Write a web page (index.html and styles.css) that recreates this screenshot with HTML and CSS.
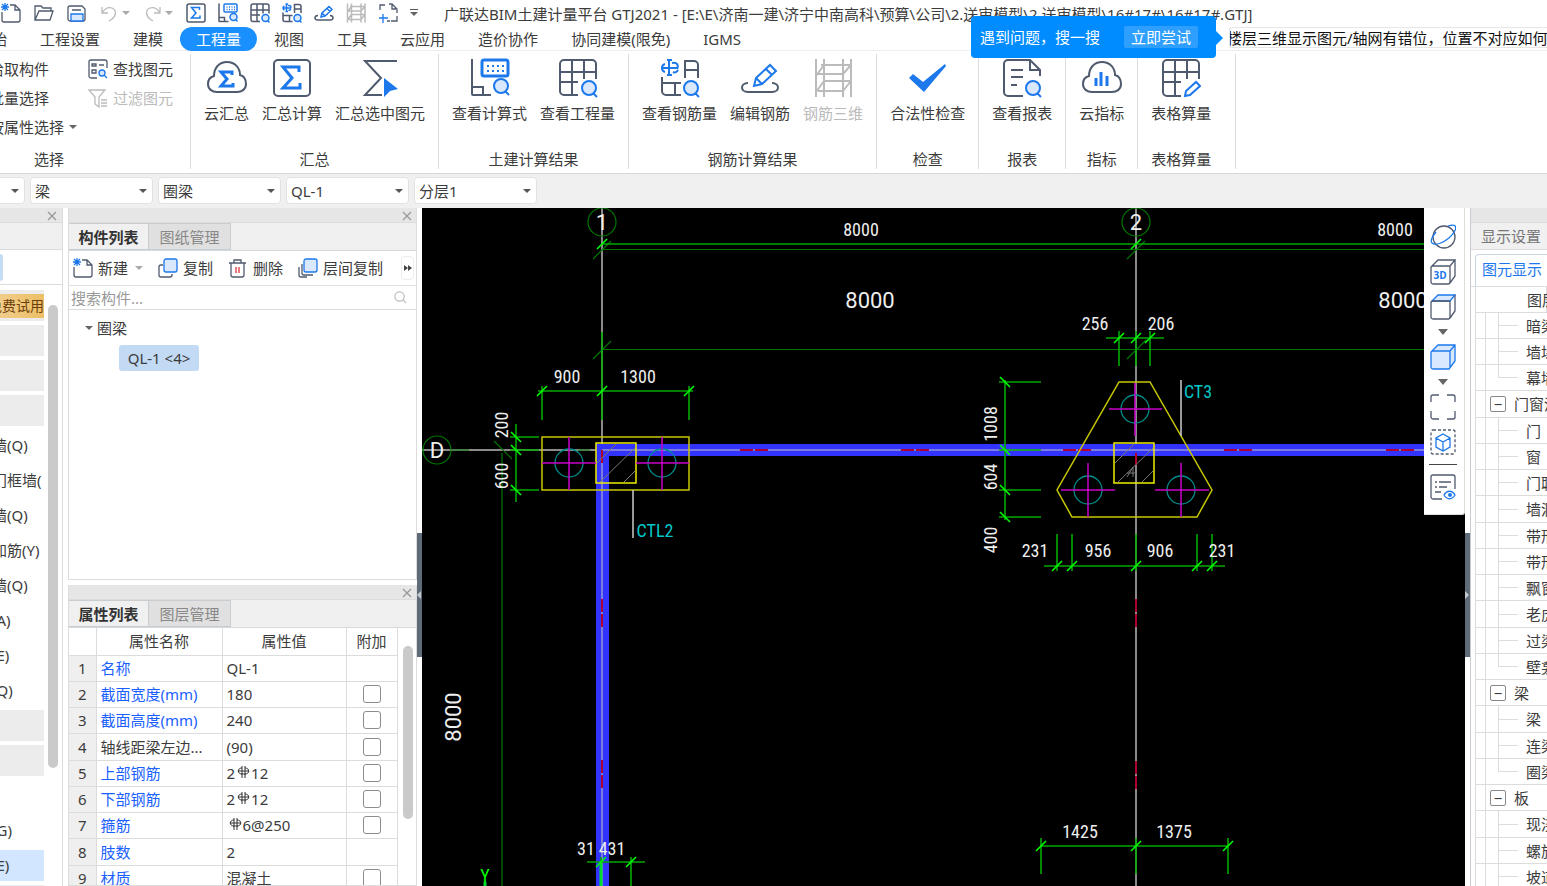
FILE: index.html
```html
<!DOCTYPE html>
<html lang="zh-CN">
<head>
  <meta charset="UTF-8">
  <meta name="viewport" content="width=device-width, initial-scale=1.0">
  <title>广联达BIM土建计量平台 GTJ2021</title>
  <link rel="stylesheet" href="styles.css">
</head>
<body>
  <!-- 图标 -->
  <svg class="sprite" aria-hidden="true">
    <symbol id="i-new" viewBox="0 0 20 20"><path class="d" d="M1 9v8a2 2 0 0 0 2 2h14a2 2 0 0 0 2-2V7l-5-5H9M14 2v5h5"/><path class="b" d="M1 1l6 6M7 1L1 7M4 0v8M0 4h8"/></symbol>
    <symbol id="i-open" viewBox="0 0 20 20"><path class="d" d="M1 17V3h6l2 2h8v3M1 17L5 8h14l-3 9z"/></symbol>
    <symbol id="i-save" viewBox="0 0 20 20"><path class="d" d="M3 3h12l3 3v10a2 2 0 0 1-2 2H3a2 2 0 0 1-2-2V5a2 2 0 0 1 2-2zM5 7h9"/><path class="bl" d="M4 18v-7h12v7z"/></symbol>
    <symbol id="i-undo" viewBox="0 0 20 20"><path class="g" d="M2 4v6h6M2 10c3-5 7-6 10-5 5 2 4 8 0 11l-3 2"/></symbol>
    <symbol id="i-redo" viewBox="0 0 20 20"><path class="g" d="M17 4v6h-6M17 10c-3-5-7-6-10-5-5 2-4 8 0 11l3 2"/></symbol>
    <symbol id="i-cloudsum" viewBox="0 0 40 40"><path class="d" d="M10 34c-5 0-9-3-9-8 0-4 2-7 6-8C7 10 12 4 20 4s13 6 13 13c4 1 6 5 6 9 0 5-4 8-9 8z"/><path class="b thick" d="M25 17v-3H14l6 7-6 7h12v-3"/></symbol>
    <symbol id="i-sum" viewBox="0 0 40 40"><rect class="d" x="2" y="2" width="36" height="36" rx="4"/><path class="b thick" d="M27 14V9H11l9 11-9 10h17v-5"/></symbol>
    <symbol id="i-sumsel" viewBox="0 0 40 40"><path class="d" d="M36 4v-1H5l16 17L5 37h17"/><path class="bf" d="M24 20l14 11-8 2-6 6z"/></symbol>
    <symbol id="i-calc" viewBox="0 0 40 40"><path class="d" d="M2 1v35a1 1 0 0 0 1 1h18M2 29h11v8"/><rect class="b thick" x="12" y="2" width="26" height="16" rx="2"/><path class="b dot" d="M17 8h18M17 13h18"/><circle class="bl" cx="31" cy="28" r="7"/><path class="b" d="M35 33l4 4"/></symbol>
    <symbol id="i-grid" viewBox="0 0 40 40"><path class="d" d="M20 37H6a4 4 0 0 1-4-4V6a4 4 0 0 1 4-4h28a4 4 0 0 1 4 4v15M2 14h36M2 24h18M14 2v35M26 2v19"/><circle class="bl" cx="31" cy="30" r="7"/><path class="b" d="M35 35l4 4"/></symbol>
    <symbol id="i-rebar" viewBox="0 0 40 40"><path class="b" d="M9 1v17M7 2h5M7 17h5M5 6c-4 1-4 7 0 8M12 5c5-1 7 2 5 6M13 14c2 1 4 0 5-2M1 10h17"/><path class="d" d="M25 20V3h9a4 4 0 0 1 4 4v13M25 12h13M2 19v14a4 4 0 0 0 4 4h15M2 25h19M15 25v12"/><circle class="bl" cx="31" cy="30" r="7"/><path class="b" d="M35 35l4 4"/></symbol>
    <symbol id="i-edit" viewBox="0 0 40 40"><path class="d" d="M8 25c-8 0-8 9 0 9h24c8 0 8-9 0-9"/><path class="b" d="M14 28l2-8L30 7l6 6-14 13zM26 11l6 6M16 20l6 6"/></symbol>
    <symbol id="i-3drebar" viewBox="0 0 40 40"><path class="g" d="M3 1v38M11 1v38M30 1v38M38 1v38M8 7h30M5 16h26M10 23h28M5 33h26M3 18l8-11M3 34l8-11M30 16l8-9M30 33l8-10"/></symbol>
    <symbol id="i-crop" viewBox="0 0 20 20"><path class="d" d="M2 7V2h5M11 1h3l5 5v4M14 2v4h4M19 13v5h-6M9 18h3"/><path class="b" d="M1 15h9M5 11v9"/></symbol>
    <symbol id="i-check" viewBox="0 0 40 40"><path class="bf" d="M1 20l4-4 10 8L37 6l1 2-22 26z"/></symbol>
    <symbol id="i-report" viewBox="0 0 40 40"><path class="d" d="M21 38H6a4 4 0 0 1-4-4V6a4 4 0 0 1 4-4h22l10 10v6M28 2v10h10M9 12h12M9 19h12M9 27h6"/><circle class="bl" cx="31" cy="30" r="7"/><path class="b" d="M35 35l4 4"/></symbol>
    <symbol id="i-cloudidx" viewBox="0 0 40 40"><path class="d" d="M10 34c-5 0-9-3-9-8 0-4 2-7 6-8C7 10 12 4 20 4s13 6 13 13c4 1 6 5 6 9 0 5-4 8-9 8z"/><path class="b thick" d="M14 20v8M19 14v14M25 18v10"/></symbol>
    <symbol id="i-gridedit" viewBox="0 0 40 40"><path class="d" d="M20 38H6a4 4 0 0 1-4-4V6a4 4 0 0 1 4-4h28a4 4 0 0 1 4 4v15M2 14h36M2 24h18M14 2v36M26 2v19"/><path class="b" d="M24 38l1-5 10-9 4 4-10 9z"/></symbol>
    <symbol id="i-find" viewBox="0 0 20 20"><path class="d" d="M9 19H3a2 2 0 0 1-2-2V3a2 2 0 0 1 2-2h14a2 2 0 0 1 2 2v6M4 5h4v2H4zM11 6h5M4 11h4v3H4z"/><circle class="bl" cx="14" cy="14" r="3"/><path class="b" d="M16 16l3 3"/></symbol>
    <symbol id="i-filter" viewBox="0 0 20 20"><path class="g" d="M1 2h16l-6 7v10l-4-3V9zM13 12h6M13 15h6M13 18h6"/></symbol>
    <symbol id="i-copy" viewBox="0 0 20 20"><path class="d" d="M5 7H3a2 2 0 0 0-2 2v8a2 2 0 0 0 2 2h9a2 2 0 0 0 2-2v-1"/><rect class="bl" x="6" y="1" width="13" height="13" rx="2"/></symbol>
    <symbol id="i-trash" viewBox="0 0 20 20"><path class="d" d="M1 5h17M6 5V2h7v3M3 5v12a2 2 0 0 0 2 2h9a2 2 0 0 0 2-2V5"/><path class="r" d="M8 9v6M11 9v6"/></symbol>
    <symbol id="i-layers" viewBox="0 0 20 20"><path class="d" d="M4 6v9a2 2 0 0 0 2 2h9M1 9v8a2 2 0 0 0 2 2h6"/><rect class="bl" x="6" y="1" width="13" height="13" rx="2"/></symbol>
    <symbol id="i-search" viewBox="0 0 14 14"><circle class="g" cx="6" cy="6" r="5"/><path class="g" d="M10 10l3 3"/></symbol>
    <symbol id="i-bar" viewBox="0 0 12 14"><path class="k" d="M5 1v12M8 1v12M5 3C0 3 0 9 5 9M8 3c5 0 5 6 0 6M1 6h11M4 9h5"/></symbol>
    <symbol id="i-x" viewBox="0 0 10 10"><path class="x" d="M1 1l8 8M9 1L1 9"/></symbol>
  </svg>

  <header class="titlebar">
    <div class="quick">
      <button title="新建"><svg><use href="#i-new"/></svg></button>
      <button title="打开"><svg><use href="#i-open"/></svg></button>
      <button title="保存"><svg><use href="#i-save"/></svg></button>
      <button title="撤销"><svg><use href="#i-undo"/></svg><i class="caret light"></i></button>
      <button title="重做"><svg><use href="#i-redo"/></svg><i class="caret light"></i></button>
    </div>
    <div class="quick tools">
      <button title="汇总计算"><svg><use href="#i-sum"/></svg></button>
      <button title="查看计算式"><svg><use href="#i-calc"/></svg></button>
      <button title="查看工程量"><svg><use href="#i-grid"/></svg></button>
      <button title="查看钢筋量"><svg><use href="#i-rebar"/></svg></button>
      <button title="编辑钢筋"><svg><use href="#i-edit"/></svg></button>
      <button title="钢筋三维"><svg><use href="#i-3drebar"/></svg></button>
      <button title="区域"><svg><use href="#i-crop"/></svg></button>
      <button title="更多" class="more-quick"><i class="caret"></i></button>
    </div>
    <h1>广联达BIM土建计量平台 GTJ2021 - [E:\E\济南一建\济宁中南高科\预算\公司\2.送审模型\2.送审模型\16#17#\16#17#.GTJ]</h1>
  </header>

  <nav class="menu">
    <button>开始</button>
    <button>工程设置</button>
    <button>建模</button>
    <button class="active">工程量</button>
    <button>视图</button>
    <button>工具</button>
    <button>云应用</button>
    <button>造价协作</button>
    <button>协同建模(限免)</button>
    <button>IGMS</button>
    <div class="ask">
      <input type="text" aria-label="搜索问题" value="楼层三维显示图元/轴网有错位，位置不对应如何">
      <div class="tip"><span>遇到问题，搜一搜</span><button>立即尝试</button></div>
    </div>
  </nav>

  <section class="ribbon">
    <div class="group select-group">
      <div class="items">
        <div class="stack">
          <button>拾取构件</button>
          <button>批量选择</button>
          <button>按属性选择<i class="caret"></i></button>
        </div>
        <div class="stack">
          <button><svg><use href="#i-find"/></svg>查找图元</button>
          <button disabled><svg><use href="#i-filter"/></svg>过滤图元</button>
        </div>
      </div>
      <p>选择</p>
    </div>
    <div class="group">
      <div class="items">
        <button class="big"><svg><use href="#i-cloudsum"/></svg>云汇总</button>
        <button class="big"><svg><use href="#i-sum"/></svg>汇总计算</button>
        <button class="big"><svg><use href="#i-sumsel"/></svg>汇总选中图元</button>
      </div>
      <p>汇总</p>
    </div>
    <div class="group">
      <div class="items">
        <button class="big"><svg><use href="#i-calc"/></svg>查看计算式</button>
        <button class="big"><svg><use href="#i-grid"/></svg>查看工程量</button>
      </div>
      <p>土建计算结果</p>
    </div>
    <div class="group">
      <div class="items">
        <button class="big"><svg><use href="#i-rebar"/></svg>查看钢筋量</button>
        <button class="big"><svg><use href="#i-edit"/></svg>编辑钢筋</button>
        <button class="big" disabled><svg><use href="#i-3drebar"/></svg>钢筋三维</button>
      </div>
      <p>钢筋计算结果</p>
    </div>
    <div class="group">
      <div class="items">
        <button class="big"><svg><use href="#i-check"/></svg>合法性检查</button>
      </div>
      <p>检查</p>
    </div>
    <div class="group">
      <div class="items">
        <button class="big"><svg><use href="#i-report"/></svg>查看报表</button>
      </div>
      <p>报表</p>
    </div>
    <div class="group">
      <div class="items">
        <button class="big"><svg><use href="#i-cloudidx"/></svg>云指标</button>
      </div>
      <p>指标</p>
    </div>
    <div class="group last">
      <div class="items">
        <button class="big"><svg><use href="#i-gridedit"/></svg>表格算量</button>
      </div>
      <p>表格算量</p>
    </div>
  </section>

  <section class="combos">
    <label><select aria-label="楼层"><option>首层</option></select></label>
    <label><select aria-label="构件大类"><option>梁</option></select></label>
    <label><select aria-label="构件类型"><option>圈梁</option></select></label>
    <label><select aria-label="构件"><option>QL-1</option></select></label>
    <label><select aria-label="分层"><option>分层1</option></select></label>
  </section>

  <main>
    <!-- 模块导航 -->
    <aside class="modules">
      <div class="grip"><button aria-label="关闭"><svg><use href="#i-x"/></svg></button></div>
      <div class="blank-tabs"></div>
      <div class="view-switch"><span></span></div>
      <div class="module-body">
        <ul>
          <li class="head"><button class="trial">免费试用</button></li>
          <li class="head"></li>
          <li class="head"></li>
          <li class="head"></li>
          <li>剪力墙(Q)</li>
          <li>人防门框墙(</li>
          <li>砌体墙(Q)</li>
          <li>砌体加筋(Y)</li>
          <li>保温墙(Q)</li>
          <li>暗梁(A)</li>
          <li>墙垛(E)</li>
          <li>幕墙(Q)</li>
          <li class="head"></li>
          <li class="head"></li>
          <li></li>
          <li>连梁(G)</li>
          <li class="current">圈梁(E)</li>
          <li class="head"></li>
        </ul>
        <div class="scroll"></div>
      </div>
    </aside>

    <div class="panels">
      <section class="panel components">
        <div class="grip"><button aria-label="关闭"><svg><use href="#i-x"/></svg></button></div>
        <div class="tabs"><button class="on">构件列表</button><button>图纸管理</button></div>
        <div class="tools-row">
          <button><svg><use href="#i-new"/></svg>新建<i class="caret light"></i></button>
          <button><svg><use href="#i-copy"/></svg>复制</button>
          <button><svg><use href="#i-trash"/></svg>删除</button>
          <button><svg><use href="#i-layers"/></svg>层间复制</button>
          <button class="overflow" aria-label="更多"><i></i><i></i></button>
        </div>
        <div class="find"><input type="text" placeholder="搜索构件..." aria-label="搜索构件"><svg><use href="#i-search"/></svg></div>
        <div class="tree">
          <div class="node"><i class="caret"></i>圈梁</div>
          <div class="leaf">QL-1 &lt;4&gt;</div>
        </div>
      </section>

      <section class="panel properties">
        <div class="grip"><button aria-label="关闭"><svg><use href="#i-x"/></svg></button></div>
        <div class="tabs"><button class="on">属性列表</button><button>图层管理</button></div>
        <div class="props-body">
          <table>
            <thead>
              <tr><th class="no"></th><th class="name">属性名称</th><th class="value">属性值</th><th class="extra">附加</th></tr>
            </thead>
            <tbody>
              <tr><td>1</td><td class="key">名称</td><td>QL-1</td><td></td></tr>
              <tr><td>2</td><td class="key">截面宽度(mm)</td><td>180</td><td><input type="checkbox" aria-label="截面宽度附加"></td></tr>
              <tr><td>3</td><td class="key">截面高度(mm)</td><td>240</td><td><input type="checkbox" aria-label="截面高度附加"></td></tr>
              <tr><td>4</td><td>轴线距梁左边...</td><td>(90)</td><td><input type="checkbox" aria-label="轴线距离附加"></td></tr>
              <tr><td>5</td><td class="key">上部钢筋</td><td>2<svg><use href="#i-bar"/></svg>12</td><td><input type="checkbox" aria-label="上部钢筋附加"></td></tr>
              <tr><td>6</td><td class="key">下部钢筋</td><td>2<svg><use href="#i-bar"/></svg>12</td><td><input type="checkbox" aria-label="下部钢筋附加"></td></tr>
              <tr><td>7</td><td class="key">箍筋</td><td><svg><use href="#i-bar"/></svg>6@250</td><td><input type="checkbox" aria-label="箍筋附加"></td></tr>
              <tr><td>8</td><td class="key">肢数</td><td>2</td><td></td></tr>
              <tr><td>9</td><td class="key">材质</td><td>混凝土</td><td><input type="checkbox" aria-label="材质附加"></td></tr>
            </tbody>
          </table>
          <div class="scroll"></div>
        </div>
      </section>
    </div>

    <div class="gutter"><button aria-label="收起左侧"></button></div>

    <!-- 绘图区 -->
    <div class="canvas">
      <svg class="cad" viewBox="422 208 1043 678" preserveAspectRatio="xMinYMin slice">
        <defs><path id="tick" d="M-5 5L5 -5"/><path id="tock" d="M-5 -5L5 5"/></defs>
        <!-- 轴网 -->
        <g class="axis">
          <path d="M602 208V444M1136 208V886M422 450H596"/>
        </g>
        <g class="green dark">
          <circle cx="602" cy="222" r="14"/><circle cx="1136" cy="222" r="14"/><circle cx="437" cy="450" r="14"/>
          <path d="M602 249.500H1465M602 349.500H1465M593 359l18-18M1127 359l19-19M593 259l18-18M1127 259l18-18"/>
          <path d="M502 453V886M494 441l18 18M452 450h17M578 450h12"/>
        </g>
        <!-- 圈梁 -->
        <path class="beam" d="M596 444H1465V456H609V886H596z"/>
        <path class="mid" d="M602 450H1465M602 450V886"/>
        <path class="red" d="M740 450h28M901 450h28M1063 450h28M1224 450h28M1386 450h28M602 450v15M602 599v28M602 760v28M1136 453v12M1136 599v28M1136 761v28"/>
        <!-- 承台 -->
        <g class="yellow">
          <rect x="542" y="437" width="147" height="53"/>
          <path d="M1119 382H1150L1212 490L1197 517H1072L1057 490z"/>
          <rect class="col" x="596" y="443" width="40" height="40"/>
          <rect class="col" x="1114" y="443" width="40" height="40"/>
        </g>
        <path class="hatch" d="M597 463l19-19M600 482l35-34M624 482l11-11M1115 463l19-19M1118 482l35-34M1142 482l11-11M1127 477l6-10v10M1127 473h9"/>
        <g class="teal">
          <circle cx="569" cy="463" r="14"/><circle cx="662" cy="463" r="14"/>
          <circle cx="1135" cy="409" r="14"/><circle cx="1088" cy="490" r="14"/><circle cx="1181" cy="490" r="14"/>
        </g>
        <path class="magenta" d="M569 437v53M542 463h54M662 437v53M636 463h53M1135 383v53M1109 409h53M1088 463v54M1061 490h54M1181 463v54M1155 490h54"/>
        <path class="leader" d="M633 490v48M1181 380v56"/>
        <!-- 尺寸线 -->
        <g class="green">
          <path d="M602 244H1465"/>
          <path d="M538 391h155M542 386v34M689 386v34M602 332v88"/>
          <path d="M516 424v78M510 437h29M510 450h29M510 490h29"/>
          <path d="M1106 338h58M1119 331v35M1136 331v35M1150 331v35"/>
          <path d="M1005 380v140M999 382h42M999 450h42M999 490h42M999 517h42"/>
          <path d="M1044 566h181M1057 534v37M1072 534v37M1136 534v37M1197 534v37M1212 534v37"/>
          <path d="M1041 846h187M1041 838v36M1136 838v36M1228 838v36"/>
          <path d="M587 862h58M601 857v29M631 857v29"/>
        </g>
        <g class="ticks">
          <use href="#tick" x="602" y="244"/><use href="#tick" x="1136" y="244"/>
          <use href="#tick" x="542" y="391"/><use href="#tick" x="602" y="391"/><use href="#tick" x="689" y="391"/>
          <use href="#tock" x="516" y="437"/><use href="#tock" x="516" y="450"/><use href="#tock" x="516" y="490"/>
          <use href="#tick" x="1119" y="338"/><use href="#tick" x="1136" y="338"/><use href="#tick" x="1150" y="338"/>
          <use href="#tock" x="1005" y="382"/><use href="#tock" x="1005" y="450"/><use href="#tock" x="1005" y="490"/><use href="#tock" x="1005" y="517"/>
          <use href="#tick" x="1057" y="566"/><use href="#tick" x="1072" y="566"/><use href="#tick" x="1136" y="566"/><use href="#tick" x="1197" y="566"/><use href="#tick" x="1212" y="566"/>
          <use href="#tick" x="1041" y="846"/><use href="#tick" x="1136" y="846"/><use href="#tick" x="1228" y="846"/>
          <use href="#tick" x="601" y="862"/><use href="#tick" x="631" y="862"/>
          <path class="ucs-axis" d="M601 863v23M485 882v4"/>
        </g>
        <g class="axis-text">
          <text x="602" y="230">1</text><text x="1136" y="230">2</text><text x="437" y="458">D</text>
          <text x="870" y="308">8000</text><text x="1403" y="308">8000</text>
          <text transform="translate(461 717) rotate(-90)">8000</text>
        </g>
        <g class="dim-text">
          <text x="861" y="236">8000</text><text x="1395" y="236">8000</text>
          <text x="567" y="383">900</text><text x="638" y="383">1300</text>
          <text x="1095" y="330">256</text><text x="1161" y="330">206</text>
          <text x="1035" y="557">231</text><text x="1098" y="557">956</text><text x="1160" y="557">906</text><text x="1222" y="557">231</text>
          <text x="1080" y="838">1425</text><text x="1174" y="838">1375</text>
          <text x="586" y="855">31</text><text x="612" y="855">431</text>
          <text transform="translate(508 425) rotate(-90)">200</text>
          <text transform="translate(508 476) rotate(-90)">600</text>
          <text transform="translate(997 424) rotate(-90)">1008</text>
          <text transform="translate(997 477) rotate(-90)">604</text>
          <text transform="translate(997 540) rotate(-90)">400</text>
          <text class="tag" x="655" y="537">CTL2</text><text class="tag" x="1198" y="398">CT3</text>
          <text class="ucs" x="485" y="882">Y</text>
        </g>
      </svg>

      <div class="view-tools">
        <button aria-label="动态观察"><svg viewBox="0 0 26 26"><circle class="d" cx="14" cy="13" r="11"/><path class="b" d="M6 8c-4 5-6 9-4 11 3 3 11 0 17-5 6-6 8-10 6-12-1-1-4-1-7 0"/></svg></button>
        <button aria-label="三维"><svg viewBox="0 0 26 26"><path class="d" d="M3 7h16a1 1 0 0 1 1 1v15a2 2 0 0 1-2 2H3a2 2 0 0 1-2-2V9a2 2 0 0 1 2-2zM2 7l6-6h17l-5 6M25 1v16l-5 7"/><text class="label3d" x="10" y="20">3D</text></svg></button>
        <button aria-label="俯视"><svg viewBox="0 0 26 26"><path class="bl" d="M2 7l6-6h17l-5 6z"/><path class="d" d="M3 7h16a1 1 0 0 1 1 1v15a2 2 0 0 1-2 2H3a2 2 0 0 1-2-2V9a2 2 0 0 1 2-2zM25 1v16l-5 7"/></svg></button>
        <i class="caret"></i>
        <button aria-label="着色"><svg viewBox="0 0 26 26"><path class="bl" d="M2 7l6-6h17v16l-6 8H3a2 2 0 0 1-2-2V8zM2 7h18v17M20 7l5-6"/></svg></button>
        <i class="caret"></i>
        <button aria-label="全屏"><svg viewBox="0 0 26 26"><path class="d" d="M1 8V3a2 2 0 0 1 2-2h6M17 1h6a2 2 0 0 1 2 2v5M25 17v6a2 2 0 0 1-2 2h-6M9 25H3a2 2 0 0 1-2-2v-6"/></svg></button>
        <button aria-label="局部三维"><svg viewBox="0 0 26 26"><rect class="d dash" x="1" y="1" width="24" height="24" rx="2"/><path class="b" d="M13 5l7 4v9l-7 4-7-4V9zM6 9l7 4 7-4M13 13v9"/></svg></button>
        <hr>
        <button aria-label="显示设置"><svg viewBox="0 0 26 26"><path class="d" d="M12 25H3a2 2 0 0 1-2-2V3a2 2 0 0 1 2-2h20a2 2 0 0 1 2 2v12M5 8h2M9 8h12M5 13h2M9 13h8M5 18h6"/><path class="b" d="M14 21c3-5 8-5 11 0-3 5-8 5-11 0z"/><circle class="bf" cx="20" cy="21" r="2"/></svg></button>
      </div>
    </div>

    <div class="gutter right"><button aria-label="收起右侧"></button></div>

    <aside class="display">
      <div class="grip"></div>
      <h2>显示设置</h2>
      <div class="display-tab"><button>图元显示</button></div>
      <div class="display-head">图层</div>
      <ul>
        <li>暗梁</li>
        <li>墙垛</li>
        <li class="end">幕墙</li>
        <li class="parent"><button aria-label="折叠">−</button>门窗洞</li>
        <li>门</li>
        <li>窗</li>
        <li>门联窗</li>
        <li>墙洞</li>
        <li>带形窗</li>
        <li>带形洞</li>
        <li>飘窗</li>
        <li>老虎窗</li>
        <li>过梁</li>
        <li class="end">壁龛</li>
        <li class="parent"><button aria-label="折叠">−</button>梁</li>
        <li>梁</li>
        <li>连梁</li>
        <li class="end">圈梁</li>
        <li class="parent"><button aria-label="折叠">−</button>板</li>
        <li>现浇板</li>
        <li>螺旋板</li>
        <li>坡道</li>
      </ul>
    </aside>
  </main>
</body>
</html>
```
FILE: styles.css
```css
* {
  box-sizing: border-box;
}

body {
  margin: 0;
  height: 100vh;
  display: flex;
  flex-direction: column;
  overflow: hidden;
  background: #fff;
  color: #3c3c3c;
  font: 15px/20px "Noto Sans", "Noto Sans CJK SC", sans-serif;
  white-space: nowrap;
}

button, input, select {
  font: inherit;
  color: inherit;
  margin: 0;
  padding: 0;
  border: none;
  background: none;
}

h1, h2, p, ul {
  margin: 0;
  padding: 0;
  font-size: 15px;
  font-weight: normal;
  list-style: none;
}

svg {
  display: block;
  width: 20px;
  height: 20px;
  flex: none;
}

.sprite {
  position: absolute;
  width: 0;
  height: 0;
}

/* 图标线条 */
.d, .b, .bl, .g, .r, .k, .x {
  fill: none;
  stroke: #505a6e;
  stroke-width: 1.3;
}

.b { stroke: #1c78eb; }
.bl { stroke: #1c78eb; fill: #d9e8fc; }
.bf { fill: #1c78eb; }
.g { stroke: #bbb; }
.r { stroke: #e0323c; }
.k { stroke: #333; stroke-width: 1; }
.x { stroke: #999; }
.dot { stroke-dasharray: 2 3; }
.dash { stroke-dasharray: 3 2; }

symbol[viewBox="0 0 40 40"] .d,
symbol[viewBox="0 0 40 40"] .b,
symbol[viewBox="0 0 40 40"] .bl,
symbol[viewBox="0 0 40 40"] .g {
  stroke-width: var(--line, 2);
}

symbol[viewBox="0 0 40 40"] .thick {
  stroke-width: 3;
}

.caret {
  width: 0;
  height: 0;
  border: 4px solid transparent;
  border-top-color: #666;
  border-bottom: 0;
}

.caret.light {
  border-top-color: #aaa;
}

/* 标题栏 */
.titlebar {
  flex: none;
  height: 27px;
  display: flex;
  align-items: center;
  background: #fff;
}

.quick {
  --line: 3;
  display: flex;
  align-items: center;
  gap: 13px;
  padding: 0 0 2px 1px;
}

.quick.tools {
  gap: 12px;
  margin: 0 26px 0 12px;
}

.quick button {
  display: flex;
  align-items: center;
  gap: 2px;
}

.quick .more-quick {
  border-top: 1px solid #555;
  padding-top: 2px;
}

/* 菜单 */
.menu {
  flex: none;
  height: 24px;
  display: flex;
  gap: 1px;
  margin-left: -39px;
  border-bottom: 1px solid #f0f0f0;
}

.menu > button {
  height: 24px;
  padding: 0 16px;
}

.menu .active {
  background: #1a90ff;
  color: #fff;
  border-radius: 12px;
}

.ask {
  position: relative;
  margin-left: auto;
  width: 318px;
}

.ask input {
  width: 100%;
  height: 21px;
  border: 1px solid #e6e6e6;
  border-right: 0;
  border-radius: 3px 0 0 3px;
  color: #111;
  text-indent: -3px;
}

.tip {
  position: absolute;
  right: 100%;
  top: -11px;
  margin-right: 13px;
  width: 245px;
  height: 42px;
  padding: 0 18px 0 9px;
  display: flex;
  align-items: center;
  justify-content: space-between;
  background: #008cff;
  color: #fff;
  border-radius: 4px;
}

.tip::after {
  content: "";
  position: absolute;
  left: 100%;
  top: 15px;
  border: 7px solid transparent;
  border-left-color: #008cff;
  border-right: 0;
}

.tip button {
  height: 22px;
  padding: 0 7px;
  background: #2e9fff;
  border-radius: 2px;
}

/* 功能区 */
.ribbon {
  flex: none;
  height: 123px;
  display: flex;
  padding: 3px 0 4px;
  border-bottom: 1px solid #d8d8d8;
}

.group {
  display: flex;
  flex-direction: column;
  justify-content: space-between;
  padding: 0 13px;
  border-right: 1px solid #dcdcdc;
}

.group.last {
  padding-right: 24px;
}

.group p {
  text-align: center;
}

.items {
  display: flex;
  gap: 13px;
}

.big {
  display: flex;
  flex-direction: column;
  align-items: center;
  gap: 5px;
  padding-top: 4px;
}

.big svg {
  width: 40px;
  height: 40px;
}

button:disabled {
  color: #bbb;
}

.select-group {
  width: 283px;
  margin-left: -92px;
  padding: 0;
}

.select-group .items {
  justify-content: flex-end;
  padding-right: 17px;
  gap: 8px;
}

.stack {
  display: flex;
  flex-direction: column;
  align-items: flex-start;
  gap: 9px;
  padding-top: 5px;
}

.stack:first-child {
  width: 91px;
}

.stack button {
  display: flex;
  align-items: center;
  gap: 5px;
}

/* 下拉条 */
.combos {
  flex: none;
  height: 34px;
  display: flex;
  align-items: center;
  gap: 5px;
  margin-left: -98px;
  padding-bottom: 1px;
  background: #f0f0f0;
}

.combos label {
  position: relative;
  width: 123px;
}

.combos label::after {
  content: "";
  position: absolute;
  right: 6px;
  top: 12px;
  border: 4px solid transparent;
  border-top-color: #555;
  border-bottom: 0;
}

.combos select {
  appearance: none;
  display: block;
  width: 100%;
  height: 27px;
  padding-left: 4px;
  background: #fff;
  border: 1px solid #e2e2e2;
  border-radius: 4px;
}

main {
  flex: 1;
  min-height: 0;
  display: flex;
}

.grip {
  flex: none;
  height: 15px;
  padding: 2px 4px 0 0;
  display: flex;
  justify-content: flex-end;
  background: #e6e6e6;
  border-bottom: 1px solid #dcdcdc;
}

.grip svg {
  width: 10px;
  height: 10px;
}

.scroll {
  width: 10px;
  border-radius: 5px;
  background: #cacaca;
}

/* 左侧模块 */
.modules {
  flex: none;
  width: 123px;
  margin-left: -60px;
  display: flex;
  flex-direction: column;
  border-right: 1px solid #dcdcdc;
}

.modules .grip {
  padding-right: 5px;
}

.blank-tabs {
  flex: none;
  height: 27px;
  background: #f0f0f0;
  border-bottom: 1px solid #dcdcdc;
}

.view-switch {
  flex: none;
  height: 35px;
  padding-top: 4px;
  border-bottom: 1px solid #dcdcdc;
}

.view-switch span {
  display: block;
  width: 63px;
  height: 27px;
  background: #c5dcf5;
  border-radius: 3px;
}

.module-body {
  flex: 1;
  min-height: 0;
  display: flex;
  gap: 4px;
  padding-top: 5px;
  overflow: hidden;
}

.modules ul {
  width: 104px;
  display: flex;
  flex-direction: column;
  gap: 4px;
}

.modules li {
  flex: none;
  height: 31px;
  padding-left: 22px;
  line-height: 31px;
  overflow: hidden;
}

.modules .head {
  background: #ececec;
}

.modules .current {
  background: #d2e7ff;
}

.trial {
  display: block;
  width: 100%;
  height: 24px;
  margin-top: 4px;
  font-size: 14px;
  line-height: 24px;
  text-align: right;
  color: #6b3d08;
  background: linear-gradient(90deg, #f3d9a8, #edbf66);
}

.modules .scroll {
  height: 463px;
  margin-top: 15px;
}

/* 构件与属性面板 */
.panels {
  flex: none;
  width: 349px;
  margin-left: 5px;
  display: flex;
  flex-direction: column;
  gap: 5px;
}

.panel {
  display: flex;
  flex-direction: column;
  border: 1px solid #dcdcdc;
  border-top: 0;
}

.components {
  flex: 0 0 372px;
}

.properties {
  flex: 1;
  min-height: 0;
  overflow: hidden;
}

.tabs {
  flex: none;
  display: flex;
  height: 28px;
  background: #f0f0f0;
  border-bottom: 1px solid #d5d8dc;
}

.tabs button {
  width: 82px;
  border: 1px solid #c8cdd2;
  border-left: 0;
  background: #e0e0e0;
  color: #888;
}

.tabs .on {
  width: 80px;
  background: #f0f0f0;
  color: #333;
  font-weight: bold;
}

.tools-row {
  flex: none;
  height: 35px;
  display: flex;
  align-items: center;
  gap: 15px;
  padding: 0 2px 0 4px;
  border-bottom: 1px solid #e2e2e2;
}

.tools-row button {
  display: flex;
  align-items: center;
  gap: 5px;
}

.tools-row .caret {
  margin-left: 2px;
}

.tools-row .overflow {
  margin-left: auto;
  width: 13px;
  height: 24px;
  justify-content: center;
  gap: 0;
  border: 1px solid #ececec;
  border-radius: 4px;
}

.overflow i {
  border: 3px solid transparent;
  border-left: 4px solid #444;
  border-right: 0;
}

.find {
  flex: none;
  height: 24px;
  display: flex;
  align-items: center;
  padding: 0 9px 0 2px;
  border-bottom: 1px solid #dcdcdc;
}

.find input {
  flex: 1;
  min-width: 0;
}

.find input::placeholder {
  color: #999;
}

.find svg {
  width: 13px;
  height: 13px;
}

.find .g {
  stroke: #999;
}

.tree {
  padding: 8px 0 0 16px;
}

.node {
  display: flex;
  align-items: center;
  gap: 4px;
}

.leaf {
  width: 80px;
  height: 26px;
  margin: 7px 0 0 34px;
  line-height: 26px;
  text-align: center;
  background: #c2daf3;
  border-radius: 3px;
}

.props-body {
  display: flex;
  gap: 5px;
}

table {
  width: 328px;
  table-layout: fixed;
  border-collapse: collapse;
}

tr {
  height: 26px;
}

thead tr,
tbody tr:nth-child(4n) {
  height: 27px;
}

th, td {
  padding: 0 4px;
  border: 1px solid #dcdcdc;
  border-top: 0;
  font-weight: normal;
  text-align: left;
}

th {
  text-align: center;
}

th:first-child, td:first-child {
  border-left: 0;
}

td:first-child {
  text-align: center;
  background: #efefef;
}

td:last-child {
  text-align: center;
}

.no { width: 27px; }
.name { width: 126px; }
.value { width: 124px; }
.extra { width: 51px; }

.key {
  color: #1a5fff;
}

td svg {
  display: inline-block;
  width: 14px;
  height: 14px;
  margin: 0 1px;
  vertical-align: 0;
}

td input {
  appearance: none;
  display: block;
  width: 18px;
  height: 18px;
  margin: 0 auto;
  border: 1px solid #8c8c8c;
  border-radius: 3px;
  background: #fff;
}

.properties .scroll {
  height: 173px;
  margin-top: 18px;
}

.gutter {
  flex: none;
  width: 5px;
  padding-top: 325px;
}

.gutter button {
  display: flex;
  align-items: center;
  width: 5px;
  height: 124px;
  background: #5f6b78;
}

.gutter button::after {
  content: "";
  border: 4px solid transparent;
  border-right-color: #c5c9ce;
  border-left: 0;
}

.gutter.right button::after {
  border-left: 4px solid #c5c9ce;
  border-right: 0;
}

/* 绘图区 */
.canvas {
  flex: 1;
  min-width: 0;
  position: relative;
  overflow: hidden;
  background: #000;
}

.cad {
  width: 100%;
  height: 100%;
}

.cad path, .cad circle, .cad rect {
  fill: none;
}

.cad .axis { stroke: #8a8a8a; stroke-width: 2; }
.cad .green { stroke: #00a800; stroke-width: 1.6; }
.cad .dark { stroke: #007800; stroke-width: 1.2; }
.cad .ticks { stroke: #00ff00; stroke-width: 1.6; }
.cad .beam { fill: #3333ff; }
.cad .mid { stroke: #7c7ce0; stroke-width: 2; }
.cad .red { stroke: #b00030; stroke-width: 2; stroke-dasharray: 13 2; }
.cad .yellow { stroke: #c8c800; stroke-width: 1.5; }
.cad .col { stroke: #f0f000; }
.cad .hatch { stroke: #777; }
.cad .teal { stroke: #008c8c; stroke-width: 1.3; }
.cad .magenta { stroke: #c800c8; stroke-width: 1.5; }
.cad .leader { stroke: #ccc; stroke-width: 1.5; }
.cad .ucs-axis { stroke: #00dc32; stroke-width: 3; }

.cad text {
  fill: #eee;
  text-anchor: middle;
}

.axis-text {
  font: 22px Roboto, sans-serif;
}

.dim-text {
  font: 18px "Liberation Sans Narrow", "Roboto Condensed", "Liberation Sans", sans-serif;
}

.cad .tag { fill: #00c8c8; }
.cad .ucs { fill: #00ff00; }

.view-tools {
  position: absolute;
  top: 0;
  right: 0;
  width: 41px;
  padding: 16px 2px 14px 0;
  display: flex;
  flex-direction: column;
  align-items: center;
  gap: 9px;
  background: #fff;
  border: 1px solid #ddd;
  border-width: 0 1px 1px 0;
  border-radius: 0 0 3px 0;
}

.view-tools svg {
  width: 26px;
  height: 26px;
}

.view-tools .caret {
  border-width: 6px 5px 0;
}

.view-tools hr {
  width: 28px;
  height: 1px;
  margin: 0;
  border: 0;
  background: #444;
}

.cad ~ .view-tools .label3d {
  font: bold 10px "Open Sans", sans-serif;
  fill: #1c78eb;
  text-anchor: middle;
}

/* 右侧显示设置 */
.display {
  flex: none;
  width: 77px;
  overflow: hidden;
  border-left: 1px solid #c8ccd2;
}

.display h2 {
  height: 27px;
  padding-left: 10px;
  line-height: 27px;
  color: #777;
  background: #f0f0f0;
  border-bottom: 1px solid #dcdcdc;
}

.display-tab {
  height: 37px;
  padding: 4px 0 0 4px;
  border-bottom: 1px solid #dcdcdc;
}

.display-tab button {
  width: 90px;
  height: 32px;
  padding: 0 0 4px 6px;
  text-align: left;
  color: #1c78eb;
  border: 1px solid #c8d4e4;
  border-bottom: 0;
  border-radius: 4px 0 0 0;
}

.display-head {
  height: 26px;
  margin-left: 4px;
  padding-left: 51px;
  line-height: 26px;
  border: 1px solid #dcdcdc;
  border-top: 0;
}

.display ul {
  margin-left: 4px;
  border-left: 1px solid #dcdcdc;
}

.display li {
  display: flex;
  align-items: center;
  height: 26px;
  padding-left: 22px;
  border-bottom: 1px solid #dcdcdc;
  background: linear-gradient(#dcdcdc, #dcdcdc) 9px 0 / 1px 100% no-repeat, linear-gradient(#dcdcdc, #dcdcdc) 22px 0 / 1px 100% no-repeat;
}

.display li:nth-child(4n) {
  height: 27px;
}

.display li::before {
  content: "";
  flex: none;
  width: 20px;
  height: 1px;
  margin-right: 8px;
  background: #dcdcdc;
}

.display .end {
  background-size: 1px 100%, 1px 50%;
}

.display .parent {
  padding-left: 14px;
  background-size: 1px 100%, 0 0;
}

.display .parent::before {
  display: none;
}

.display .parent button {
  flex: none;
  width: 16px;
  height: 16px;
  margin-right: 8px;
  border: 1px solid #888;
  border-radius: 2px;
  line-height: 12px;
}
```
